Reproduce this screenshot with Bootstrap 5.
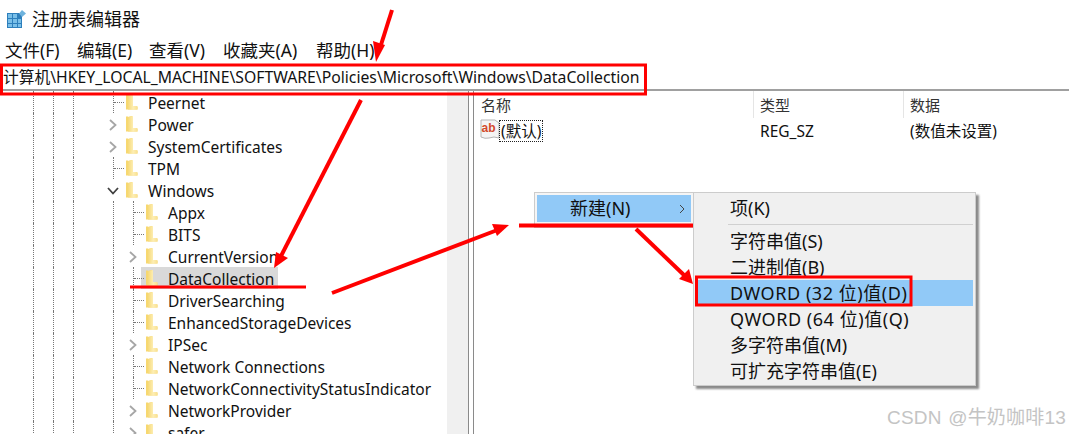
<!DOCTYPE html>
<html lang="zh-CN">
<head>
<meta charset="utf-8">
<title>注册表编辑器</title>
<link href="https://cdn.jsdelivr.net/npm/bootstrap@5.3.0/dist/css/bootstrap.min.css" rel="stylesheet">
<style>
html,body{height:435px;overflow:hidden;background:#fff;}
body{font-family:"Noto Sans","Noto Sans CJK SC",sans-serif;color:#111;font-size:15.5px;line-height:24px;}
.app{position:relative;width:1069px;height:435px;overflow:hidden;}
.titlebar{height:36px;padding:2px 0 0 7px;gap:6px;font-size:18px;line-height:34px;}
.menubar{height:28px;font-size:17.5px;line-height:28px;padding-left:5px;}
.menubar span{display:block;}
.m1{width:72px}.m2{width:72px}.m3{width:74px}.m4{width:93px}
.addr{height:27px;line-height:26px;padding-left:3px;border-bottom:2px solid #a0a0a0;white-space:nowrap;font-size:15.75px;}
.main{height:343px;}
.treepane{width:447px;overflow:hidden;}
.sbar{width:21px;background:#f0f0f0;}
.split{width:6px;border-left:1px solid #8a8a8a;border-right:1px solid #8a8a8a;}
.tnode{height:22px;padding-left:33px;white-space:nowrap;}
.g{height:22px;border-left:1px dotted #777;width:20px;flex:none;}
.g40{width:40px;}
.tick{width:12px;height:22px;flex:none;border-left:1px dotted #777;position:relative;}
.tick::after{content:"";position:absolute;left:0;top:11px;width:10px;border-top:1px dotted #777;}
.exp{width:12px;height:22px;flex:none;}
.exp svg{display:block;margin:6px 0 0 -5px;}
.exp svg.chev-open{margin:7px 0 0 -6px;}
.fold{flex:none;display:block;margin-right:10px;margin-top:3px;}
.sel-w{display:flex;height:22px;background:#d9d9d9;margin-left:-4px;padding-left:4px;padding-right:4px;}
.rightpane{flex:1;position:relative;}
.hcell{height:27px;padding:2px 0 0 7px;border-right:1px solid #e5e5e5;font-size:15px;color:#333;line-height:24px;}
.c1{width:280px}.c2{width:150px;padding-left:6px}.c3{flex:1;border-right:0;padding-left:6px;}
.vrow{font-size:15.5px;line-height:22px;height:24px;padding-top:2px;}
.v1{width:280px;padding-left:6px;}
.v2{width:150px;padding-left:6px;}
.v3{padding-left:6px;}
.regicon{flex:none;margin-top:-3px;}
.focusbox{border:1px dotted #222;padding:0 1px;display:inline-block;line-height:20px;height:22px;margin-left:-1px;}
.ctx{--bs-dropdown-border-radius:0;--bs-dropdown-min-width:0;position:absolute;margin:0;padding:2px 2px;border:1px solid #ccc;background:#f0f0f0;border-radius:0;font-size:18px;}
.ctx1{left:534px;top:192px;width:160px;height:36px;background:#f5f5f5;}
.ctx2{left:693px;top:192px;width:283px;height:194px;box-shadow:3px 3px 2px #8a8a8a;}
.ctx .dropdown-item{padding:0 0 0 33px;height:26px;line-height:26px;color:#111;background:none;border-radius:0;}
.ctx .dropdown-item.hi{background:#91c9f7;}
.ctx1 .dropdown-item{padding-left:33px;position:relative;height:27px;}
.chev{position:absolute;right:6px;top:9px;}
.sepline{border-top:1px solid #d0d0d0;margin:3px 0 3px 32px;opacity:1;}
.ctx2 .dropdown-item{margin-left:1px;width:276px;}
.latin{letter-spacing:.55px;}
.anno{position:absolute;left:0;top:0;pointer-events:none;z-index:1001;}
.wm{position:absolute;right:3px;top:405px;font-size:19px;line-height:26px;color:#c4c4c4;letter-spacing:.2px;word-spacing:1px;font-family:"Liberation Sans","Noto Sans CJK SC",sans-serif;z-index:1002;}
</style>
</head>
<body>
<svg width="0" height="0" class="position-absolute">
  <defs>
    <linearGradient id="fg" x1="0" x2="1" y1="0" y2="0"><stop offset="0" stop-color="#f6d978"/><stop offset=".55" stop-color="#fdeeb4"/><stop offset="1" stop-color="#f9e08e"/></linearGradient>
    <symbol id="folder" viewBox="0 0 13 16"><path d="M1 0.5 L3 0.5 L3 1 L7 0 L7 0.5 L7 13 L12.5 13 L12.5 15.5 L1 15.5 Z" fill="#f7d870"/><path d="M3 1 L8 0 L8 12 L12.5 12 L12.5 15.5 L3 15.5 Z" fill="url(#fg)"/></symbol>
    <symbol id="chevr" viewBox="0 0 10 12"><path d="M2 1 L7.5 6 L2 11" fill="none" stroke="#a6a6a6" stroke-width="1.8"/></symbol>
    <symbol id="chevd" viewBox="0 0 12 10"><path d="M1 2 L6 7.5 L11 2" fill="none" stroke="#404040" stroke-width="1.8"/></symbol>
  </defs>
</svg>
<div class="app">
  <div class="titlebar d-flex align-items-center">
    <svg width="19" height="18" viewBox="0 0 19 18"><rect x="0" y="3" width="15" height="15" fill="#2d7fbc"/><g fill="#79bfe8"><rect x="1" y="4" width="4" height="4"/><rect x="6" y="4" width="4" height="4"/><rect x="1" y="9" width="4" height="4"/><rect x="6" y="9" width="4" height="4"/><rect x="11" y="9" width="3" height="4"/><rect x="1" y="14" width="4" height="3"/><rect x="6" y="14" width="4" height="3"/><rect x="11" y="14" width="3" height="3"/></g><path d="M15 0 L19 3.500 L15 7 L12 3.500 Z" fill="#6fb3dd"/></svg>
    <span>注册表编辑器</span>
  </div>
  <div class="menubar d-flex">
    <span class="m1">文件(F)</span><span class="m2">编辑(E)</span><span class="m3">查看(V)</span><span class="m4">收藏夹(A)</span><span>帮助(H)</span>
  </div>
  <div class="addr">计算机\HKEY_LOCAL_MACHINE\SOFTWARE\Policies\Microsoft\Windows\DataCollection</div>
  <div class="main d-flex">
    <div class="treepane">
      <div class="tnode d-flex"><i class="g"></i><i class="g"></i><i class="g g40"></i><i class="tick"></i><svg class="fold" width="13" height="16"><use href="#folder"/></svg><span>Peernet</span></div>
      <div class="tnode d-flex"><i class="g"></i><i class="g"></i><i class="g g40"></i><i class="exp"><svg width="10" height="12"><use href="#chevr"/></svg></i><svg class="fold" width="13" height="16"><use href="#folder"/></svg><span>Power</span></div>
      <div class="tnode d-flex"><i class="g"></i><i class="g"></i><i class="g g40"></i><i class="exp"><svg width="10" height="12"><use href="#chevr"/></svg></i><svg class="fold" width="13" height="16"><use href="#folder"/></svg><span>SystemCertificates</span></div>
      <div class="tnode d-flex"><i class="g"></i><i class="g"></i><i class="g g40"></i><i class="tick"></i><svg class="fold" width="13" height="16"><use href="#folder"/></svg><span>TPM</span></div>
      <div class="tnode d-flex"><i class="g"></i><i class="g"></i><i class="g g40"></i><i class="exp"><svg width="12" height="10" class="chev-open"><use href="#chevd"/></svg></i><svg class="fold" width="13" height="16"><use href="#folder"/></svg><span>Windows</span></div>
      <div class="tnode d-flex"><i class="g"></i><i class="g"></i><i class="g g40"></i><i class="g"></i><i class="tick"></i><svg class="fold" width="13" height="16"><use href="#folder"/></svg><span>Appx</span></div>
      <div class="tnode d-flex"><i class="g"></i><i class="g"></i><i class="g g40"></i><i class="g"></i><i class="tick"></i><svg class="fold" width="13" height="16"><use href="#folder"/></svg><span>BITS</span></div>
      <div class="tnode d-flex"><i class="g"></i><i class="g"></i><i class="g g40"></i><i class="g"></i><i class="exp"><svg width="10" height="12"><use href="#chevr"/></svg></i><svg class="fold" width="13" height="16"><use href="#folder"/></svg><span>CurrentVersion</span></div>
      <div class="tnode d-flex"><i class="g"></i><i class="g"></i><i class="g g40"></i><i class="g"></i><i class="tick"></i><div class="sel-w"><svg class="fold" width="13" height="16"><use href="#folder"/></svg><span>DataCollection</span></div></div>
      <div class="tnode d-flex"><i class="g"></i><i class="g"></i><i class="g g40"></i><i class="g"></i><i class="tick"></i><svg class="fold" width="13" height="16"><use href="#folder"/></svg><span>DriverSearching</span></div>
      <div class="tnode d-flex"><i class="g"></i><i class="g"></i><i class="g g40"></i><i class="g"></i><i class="tick"></i><svg class="fold" width="13" height="16"><use href="#folder"/></svg><span>EnhancedStorageDevices</span></div>
      <div class="tnode d-flex"><i class="g"></i><i class="g"></i><i class="g g40"></i><i class="g"></i><i class="exp"><svg width="10" height="12"><use href="#chevr"/></svg></i><svg class="fold" width="13" height="16"><use href="#folder"/></svg><span>IPSec</span></div>
      <div class="tnode d-flex"><i class="g"></i><i class="g"></i><i class="g g40"></i><i class="g"></i><i class="tick"></i><svg class="fold" width="13" height="16"><use href="#folder"/></svg><span>Network Connections</span></div>
      <div class="tnode d-flex"><i class="g"></i><i class="g"></i><i class="g g40"></i><i class="g"></i><i class="tick"></i><svg class="fold" width="13" height="16"><use href="#folder"/></svg><span>NetworkConnectivityStatusIndicator</span></div>
      <div class="tnode d-flex"><i class="g"></i><i class="g"></i><i class="g g40"></i><i class="g"></i><i class="exp"><svg width="10" height="12"><use href="#chevr"/></svg></i><svg class="fold" width="13" height="16"><use href="#folder"/></svg><span>NetworkProvider</span></div>
      <div class="tnode d-flex"><i class="g"></i><i class="g"></i><i class="g g40"></i><i class="g"></i><i class="exp"><svg width="10" height="12"><use href="#chevr"/></svg></i><svg class="fold" width="13" height="16"><use href="#folder"/></svg><span>safer</span></div>
    </div>
    <div class="sbar"></div>
    <div class="split"></div>
    <div class="rightpane">
      <div class="d-flex">
        <div class="hcell c1">名称</div><div class="hcell c2">类型</div><div class="hcell c3">数据</div>
      </div>
      <div class="vrow d-flex">
        <div class="v1 d-flex">
          <svg class="regicon" width="20" height="24" viewBox="0 0 20 24"><path d="M1 3 H15 L19 6 V21 Q14 19 9 21 Q5 22 1 20 Z" fill="#f4f4f4" stroke="#b5b5b5"/><text x="1.500" y="15" font-size="12" font-weight="700" fill="#d2492a" font-family="Liberation Sans, sans-serif">ab</text></svg>
          <span class="focusbox">(默认)</span>
        </div>
        <div class="v2">REG_SZ</div>
        <div class="v3">(数值未设置)</div>
      </div>
    </div>
  </div>

  <div class="dropdown-menu show ctx ctx1">
    <a class="dropdown-item hi" href="#">新建(N)<svg class="chev" width="6" height="10" viewBox="0 0 6 10"><path d="M1 1 L5 5 L1 9" fill="none" stroke="#444"/></svg></a>
  </div>
  <div class="dropdown-menu show ctx ctx2">
    <a class="dropdown-item" href="#">项(K)</a>
    <hr class="sepline">
    <a class="dropdown-item" href="#">字符串值(S)</a>
    <a class="dropdown-item" href="#">二进制值(B)</a>
    <a class="dropdown-item hi" href="#"><span class="latin">DWORD (32 位)值(D)</span></a>
    <a class="dropdown-item" href="#"><span class="latin">QWORD (64 位)值(Q)</span></a>
    <a class="dropdown-item" href="#">多字符串值(M)</a>
    <a class="dropdown-item" href="#">可扩充字符串值(E)</a>
  </div>

  <svg class="anno" width="1069" height="435" viewBox="0 0 1069 435">
    <g fill="none" stroke="#f00">
      <rect x="1.500" y="65" width="644" height="29" stroke-width="3"/>
      <rect x="696.500" y="277" width="214.500" height="28" stroke-width="3"/>
      <path d="M392 10 L380 48" stroke-width="4"/>
      <path d="M361 100 L280 258" stroke-width="4"/>
      <path d="M332 293 L500 229" stroke-width="4"/>
      <path d="M636 229 L686 277" stroke-width="4"/>
      <path d="M130 287 H306" stroke-width="3"/>
      <path d="M519 225.500 H693" stroke-width="4"/>
    </g>
    <g fill="#f00">
      <path d="M373 41 L385 45 L376 62 Z"/>
      <path d="M276 252 L288 258 L274 268 Z"/>
      <path d="M492 224 L509 225 L497 236 Z"/>
      <path d="M679 279 L689 269 L693 284 Z"/>
    </g>
  </svg>
  <div class="wm">CSDN @牛奶咖啡13</div>
</div>
<script src="https://cdn.jsdelivr.net/npm/bootstrap@5.3.0/dist/js/bootstrap.bundle.min.js"></script>
</body>
</html>
